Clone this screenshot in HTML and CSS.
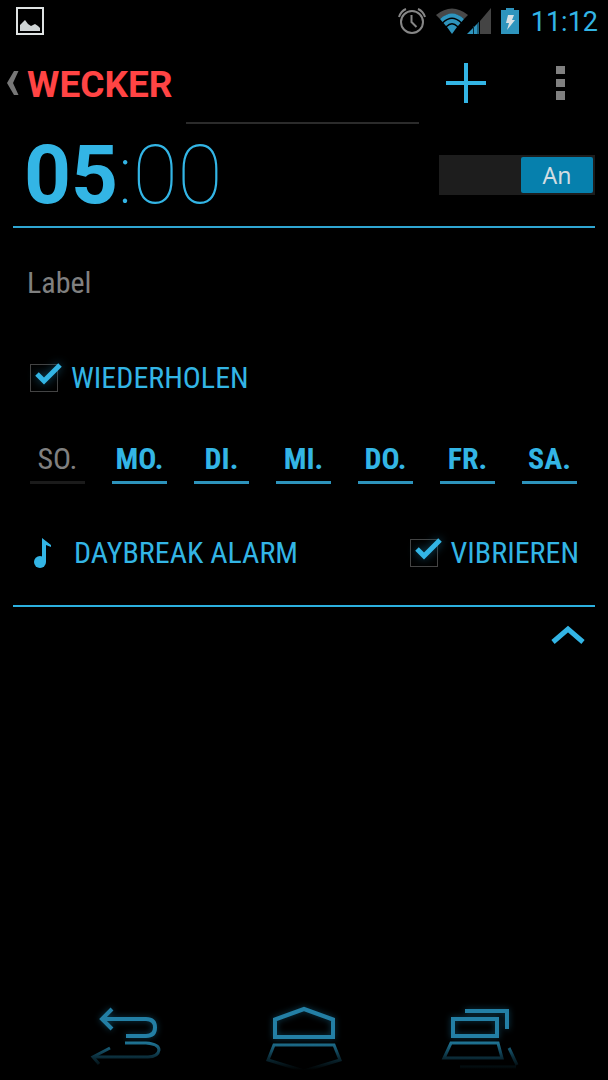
FILE: index.html
```html
<!DOCTYPE html>
<html lang="de">
<head>
<meta charset="utf-8">
<meta name="viewport" content="width=device-width, initial-scale=1">
<title>Wecker</title>
<link rel="stylesheet" href="styles.css">
</head>
<body>
<div class="screen">
  <div class="status">
    <svg class="status-photo" width="28" height="28" viewBox="0 0 28 28" aria-hidden="true">
      <rect x="1" y="1" width="26" height="26" fill="none" stroke="#dfe3e3" stroke-width="2"/>
      <path d="M4 24v-6l3-3 2-2 3 4 3 2 4-2 3 2 2 2v3z" fill="#cfd4d5"/>
    </svg>
    <div class="status-icons">
      <svg width="28" height="28" viewBox="0 0 28 28" fill="none" stroke="#868686" stroke-width="2" aria-hidden="true">
        <circle cx="14" cy="15" r="11"/>
        <path d="M13.500 8v7l5 5M1 10Q3 4 8 2M20 2q5 2 7 8"/>
      </svg>
      <svg class="signal" width="57" height="28" viewBox="0 0 57 28" aria-hidden="true">
        <path d="M1 8Q17-5 33 8L29 12Q17 2 5 12z" fill="#484848"/>
        <path d="M5 12Q17 1 29 12L26.500 15Q17 6 7.500 15z" fill="#2e94bd"/>
        <path d="M8.500 16Q17 8 25.500 16L23 19Q17 13 11 19z" fill="#2e94bd"/>
        <path d="M12 20Q17 15 22 20L17 27z" fill="#2e94bd"/>
        <path d="M32 27L44 15V27z" fill="#2e94bd"/>
        <path d="M38.500 19v8M43 16v11" stroke="#0b2a38"/>
        <path d="M45 14L56 1V27H45z" fill="#444"/>
      </svg>
      <svg class="battery" width="18" height="28" viewBox="0 0 18 28" aria-hidden="true">
        <path d="M0 3h5V1h8v2h5v24H0z" fill="#2e94bd"/>
        <path d="M7 8h6l-2 5h3L6 23l2-7H5z" fill="#d8e0e4"/>
      </svg>
      <span class="clock">11:12</span>
    </div>
  </div>

  <header class="bar">
    <button class="back" aria-label="Zurück">
      <svg width="12" height="26" viewBox="0 0 12 26" aria-hidden="true"><path d="M7 1h4.500L6 13l5.500 12H7L0 13z" fill="#777"/></svg>
    </button>
    <h1 class="title">WECKER</h1>
    <div class="bar-line"></div>
    <button class="add" aria-label="Wecker hinzufügen">
      <svg width="40" height="40" viewBox="0 0 40 40" aria-hidden="true"><path d="M20 0v40M0 20h40" stroke="#33b5e5" stroke-width="4"/></svg>
    </button>
    <button class="more" aria-label="Weitere Optionen">
      <svg width="9" height="34" viewBox="0 0 9 34" aria-hidden="true"><path d="M0 0h9v8H0zM0 13h9v8H0zM0 25h9v9H0z" fill="#808080"/></svg>
    </button>
  </header>

  <main class="alarm">
    <div class="time-row">
      <button class="time"><b>05</b>:00</button>
      <button class="switch" role="switch" aria-checked="true"><span class="thumb">An</span></button>
    </div>

    <div class="details">
      <input class="label-input" type="text" placeholder="Label" aria-label="Label">

      <label class="check repeat">
        <span class="box">
          <input type="checkbox" checked>
          <svg class="tick" width="30" height="26" viewBox="0 0 30 26" aria-hidden="true"><path d="M3 12L10 19L26 3" fill="none" stroke="#33b5e5" stroke-width="5"/></svg>
        </span>
        WIEDERHOLEN
      </label>

      <div class="days">
        <button class="day" aria-pressed="false">SO.</button>
        <button class="day on" aria-pressed="true">MO.</button>
        <button class="day on" aria-pressed="true">DI.</button>
        <button class="day on" aria-pressed="true">MI.</button>
        <button class="day on" aria-pressed="true">DO.</button>
        <button class="day on" aria-pressed="true">FR.</button>
        <button class="day on" aria-pressed="true">SA.</button>
      </div>

      <div class="sound-row">
        <button class="ringtone">
          <svg width="18" height="30" viewBox="0 0 18 30" aria-hidden="true"><circle cx="6" cy="24" r="6" fill="#33b5e5"/><path d="M8 0l9 7v2l-5-2v17H8z" fill="#33b5e5"/></svg>
          DAYBREAK ALARM
        </button>
        <label class="check">
          <span class="box">
            <input type="checkbox" checked>
            <svg class="tick" width="30" height="26" viewBox="0 0 30 26" aria-hidden="true"><path d="M3 12L10 19L26 3" fill="none" stroke="#33b5e5" stroke-width="5"/></svg>
          </span>
          VIBRIEREN
        </label>
      </div>
    </div>
    <button class="collapse" aria-label="Einklappen">
      <svg width="34" height="20" viewBox="0 0 34 20" aria-hidden="true"><path d="M2 17L17 4L32 17" fill="none" stroke="#33b5e5" stroke-width="5"/></svg>
    </button>
  </main>

  <nav class="nav">
    <button aria-label="Zurück">
      <svg width="80" height="72" viewBox="0 0 80 72" fill="none" aria-hidden="true">
        <defs><linearGradient id="fade" gradientUnits="userSpaceOnUse" x1="0" y1="42" x2="0" y2="70"><stop stop-color="#1f7596"/><stop offset=".55" stop-color="#0b2c39"/><stop offset="1" stop-color="#000"/></linearGradient></defs>
        <g class="glow" stroke="#237fa5" stroke-width="4"><path d="M14 19H58Q67 19 67 27.500Q67 36 58 36H38"/><path d="M24 9L14 19L24 29"/></g>
        <g stroke="url(#fade)" stroke-width="3"><path d="M37 43H58Q71 44 71 50Q70 57 60 57H6"/><path d="M22 48L5 57L11 64"/></g>
      </svg>
    </button>
    <button aria-label="Startseite">
      <svg width="80" height="72" viewBox="0 0 80 72" fill="none" aria-hidden="true">
        <path class="glow" d="M11 37V19.500L40 9L69 19.500V37z" stroke="#237fa5" stroke-width="4"/>
        <path d="M10 45H70L76 60L40 71L4 60z" stroke="url(#fade)" stroke-width="3"/>
      </svg>
    </button>
    <button aria-label="Letzte Apps">
      <svg width="80" height="72" viewBox="0 0 80 72" fill="none" aria-hidden="true">
        <g class="glow" stroke="#237fa5" stroke-width="4"><path d="M25 11H67V29M13 19H57V36H13z"/></g>
        <path d="M11 43H58L62 58H4zM69 48L77 65M20 67H76" stroke="url(#fade)" stroke-width="3"/>
      </svg>
    </button>
  </nav>
</div>
</body>
</html>
```
FILE: styles.css
```css
* { box-sizing: border-box; }

body {
  margin: 0;
  background: #000;
  color: #33b5e5;
  font-family: "Roboto Condensed", Roboto, sans-serif;
  font-size: 30px;
  line-height: 36px;
}

button, input { font: inherit; color: inherit; }

button {
  padding: 0;
  border: 0;
  background: none;
}

svg { display: block; }

.screen {
  display: flex;
  flex-direction: column;
  min-height: 100vh;
}

.status {
  display: flex;
  justify-content: space-between;
  align-items: center;
  height: 42px;
  padding: 0 10px 0 16px;
}

.status-icons {
  display: flex;
  align-items: center;
}

.signal { margin-left: 9px; }
.battery { margin: 0 12px 0 9px; }

.clock {
  padding-top: 2px;
  font-family: Roboto, sans-serif;
  font-size: 27px;
}

.bar {
  display: flex;
  align-items: center;
  height: 82px;
  padding: 0 43px 0 7px;
}

.title {
  margin: 0 14px 0 8px;
  padding-top: 3px;
  color: #ff4444;
  font-family: Roboto, sans-serif;
  font-size: 37px;
  font-weight: 700;
}

.bar-line {
  flex: 1;
  align-self: flex-end;
  height: 2px;
  background: #2b2b2b;
}

.add { margin: 0 70px 0 27px; }

.alarm {
  flex: 1;
  padding: 0 13px;
}

.time-row {
  display: flex;
  justify-content: space-between;
  align-items: center;
  height: 104px;
  padding-left: 11px;
  border-bottom: 2px solid #2fa6d2;
}

.time {
  font-family: Roboto, sans-serif;
  font-size: 82px;
  font-weight: 100;
  line-height: 96px;
}

.time b { font-weight: 700; }

.switch {
  display: flex;
  justify-content: flex-end;
  width: 156px;
  padding: 2px;
  background: #1d1d1d;
}

.thumb {
  width: 72px;
  border-radius: 2px;
  background: #0680ad;
  color: #d2dde2;
  font-family: "Noto Sans", sans-serif;
  font-size: 23px;
  text-align: center;
}

.details {
  padding: 34px 14px 34px;
  border-bottom: 2px solid #2cb0df;
}

.label-input {
  display: block;
  width: 100%;
  height: 40px;
  padding: 0;
  border: 0;
  outline: 0;
  background: none;
}

.label-input::placeholder {
  color: #808080;
  opacity: 1;
}

.check {
  display: flex;
  align-items: center;
  gap: 13px;
}

.repeat { margin: 58px 0 45px 3px; }

.box {
  position: relative;
  width: 28px;
  height: 28px;
}

.box input {
  display: block;
  width: 28px;
  height: 28px;
  margin: 0;
  border: 1px solid #444;
  appearance: none;
}

.tick {
  position: absolute;
  top: -2px;
  left: 4px;
  filter: drop-shadow(0 0 5px #12506a);
}

.days {
  display: flex;
  justify-content: space-between;
  padding: 0 4px 0 3px;
}

.day {
  width: 55px;
  padding-bottom: 4px;
  border-bottom: 3px solid #1b1b1b;
  color: #808080;
}

.day.on {
  border-color: #2d93bb;
  color: #33b5e5;
  font-weight: 700;
}

.sound-row {
  display: flex;
  justify-content: space-between;
  align-items: center;
  margin-top: 51px;
  padding: 0 2px 0 7px;
}

.ringtone {
  display: flex;
  align-items: center;
  gap: 22px;
}

.collapse {
  display: block;
  margin: 18px 10px 0 auto;
}

.nav {
  display: flex;
  justify-content: space-between;
  padding: 0 88px 8px;
}

.glow { filter: drop-shadow(0 0 3px #0c3c50); }
```
